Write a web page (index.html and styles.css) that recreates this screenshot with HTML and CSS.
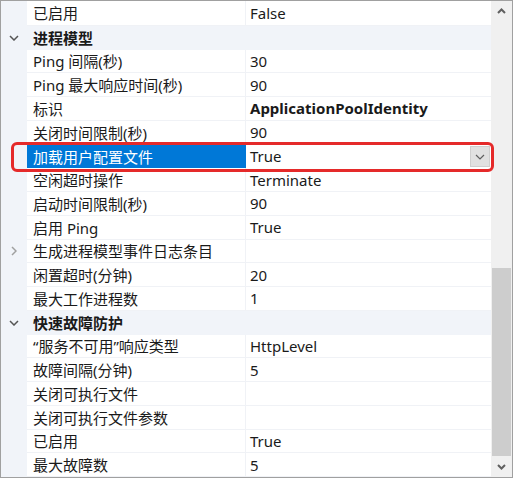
FILE: index.html
```html
<!DOCTYPE html>
<html>
<head>
<meta charset="utf-8">
<link rel="stylesheet" href="styles.css">
</head>
<body>
<div class="panel">
  <div class="grid">
    <div class="row first"><div class="gut"></div><div class="name">已启用</div><div class="val">False</div></div>
    <div class="row cat"><div class="gut"><svg class="chev" width="10" height="6" viewBox="0 0 10 6"><polyline points="1,1 5,5 9,1"/></svg></div><div class="catname">进程模型</div></div>
    <div class="row"><div class="gut"></div><div class="name">Ping 间隔(秒)</div><div class="val">30</div></div>
    <div class="row"><div class="gut"></div><div class="name">Ping 最大响应时间(秒)</div><div class="val">90</div></div>
    <div class="row"><div class="gut"></div><div class="name">标识</div><div class="val bold">ApplicationPoolIdentity</div></div>
    <div class="row"><div class="gut"></div><div class="name">关闭时间限制(秒)</div><div class="val">90</div></div>
    <div class="row sel"><div class="gut"></div><div class="name">加载用户配置文件</div><div class="val">True<span class="dd"><svg width="10" height="6" viewBox="0 0 10 6"><polyline points="1,1 5,5 9,1"/></svg></span></div></div>
    <div class="row"><div class="gut"></div><div class="name">空闲超时操作</div><div class="val">Terminate</div></div>
    <div class="row"><div class="gut"></div><div class="name">启动时间限制(秒)</div><div class="val">90</div></div>
    <div class="row"><div class="gut"></div><div class="name">启用 Ping</div><div class="val">True</div></div>
    <div class="row"><div class="gut"><svg class="exp" width="6" height="10" viewBox="0 0 6 10"><polyline points="1,1 5,5 1,9"/></svg></div><div class="name">生成进程模型事件日志条目</div><div class="val"></div></div>
    <div class="row"><div class="gut"></div><div class="name">闲置超时(分钟)</div><div class="val">20</div></div>
    <div class="row"><div class="gut"></div><div class="name">最大工作进程数</div><div class="val">1</div></div>
    <div class="row cat"><div class="gut"><svg class="chev" width="10" height="6" viewBox="0 0 10 6"><polyline points="1,1 5,5 9,1"/></svg></div><div class="catname">快速故障防护</div></div>
    <div class="row"><div class="gut"></div><div class="name">“服务不可用”响应类型</div><div class="val">HttpLevel</div></div>
    <div class="row"><div class="gut"></div><div class="name">故障间隔(分钟)</div><div class="val">5</div></div>
    <div class="row"><div class="gut"></div><div class="name">关闭可执行文件</div><div class="val"></div></div>
    <div class="row"><div class="gut"></div><div class="name">关闭可执行文件参数</div><div class="val"></div></div>
    <div class="row"><div class="gut"></div><div class="name">已启用</div><div class="val">True</div></div>
    <div class="row"><div class="gut"></div><div class="name">最大故障数</div><div class="val">5</div></div>
  </div>
  <div class="sb">
    <div class="sb-btn"><svg width="9" height="6" viewBox="0 0 9 6"><polyline points="1,5 4.5,1.5 8,5"/></svg></div>
    <div class="sb-track"><div class="thumb"></div></div>
    <div class="sb-btn"><svg width="9" height="6" viewBox="0 0 9 6"><polyline points="1,1 4.5,4.5 8,1"/></svg></div>
  </div>
  <div class="mark"></div>
</div>
</body>
</html>
```
FILE: styles.css
```css
html, body {
  margin: 0;
  padding: 0;
  background: #ffffff;
}
body {
  font-family: "Noto Sans", "Noto Sans CJK SC", sans-serif;
  font-size: 15px;
  color: #1a1a1a;
}
.panel {
  position: relative;
  width: 513px;
  height: 478px;
  box-sizing: border-box;
  border: 1px solid #a0a0a0;
  display: flex;
  background: #ffffff;
}
.grid {
  width: 490px;
  display: flex;
  flex-direction: column;
}
.row {
  display: grid;
  grid-template-columns: 26px 219px 245px;
  height: 23.75px;
  flex: none;
}
.row.first {
  height: 24.75px;
}
.gut {
  background: #f1f4f9;
  display: flex;
  align-items: center;
  justify-content: center;
}
.name, .val {
  box-sizing: border-box;
  border-bottom: 1px solid #f0f2f6;
  display: flex;
  align-items: center;
  white-space: nowrap;
  overflow: hidden;
}
.name {
  padding-left: 6px;
  border-right: 1px solid #f0f2f6;
}
.val {
  padding-left: 4px;
  position: relative;
}
.bold {
  font-weight: bold;
}
.row.cat {
  background: #f1f4f9;
}
.catname {
  grid-column: 2 / 4;
  font-weight: bold;
  padding-left: 6px;
  display: flex;
  align-items: center;
}
.chev polyline {
  fill: none;
  stroke: #555555;
  stroke-width: 1.5;
}
.exp polyline {
  fill: none;
  stroke: #a0a0a0;
  stroke-width: 1.5;
}
.row.sel .name {
  background: #0078d7;
  color: #ffffff;
  border-right: none;
  border-bottom: none;
}
.row.sel .val {
  border-bottom: none;
}
.dd {
  position: absolute;
  right: 1px;
  top: 1.5px;
  width: 20px;
  height: 21px;
  box-sizing: border-box;
  background: #e1e1e1;
  border: 1px solid #cfcfcf;
  display: flex;
  align-items: center;
  justify-content: center;
}
.dd polyline {
  fill: none;
  stroke: #606060;
  stroke-width: 1.2;
}
.sb {
  width: 21px;
  background: #f0f0f0;
  display: flex;
  flex-direction: column;
}
.sb-btn {
  height: 20px;
  display: flex;
  align-items: center;
  justify-content: center;
  flex: none;
}
.sb-btn polyline {
  fill: none;
  stroke: #606060;
  stroke-width: 2;
}
.sb-track {
  flex: 1;
  padding-top: 247px;
  padding-left: 1px;
  padding-right: 1px;
}
.thumb {
  height: 188px;
  background: #cdcdcd;
}
.mark {
  position: absolute;
  left: 10px;
  top: 141px;
  width: 483px;
  height: 30px;
  box-sizing: border-box;
  border: 3px solid #e52a2a;
  border-radius: 6px;
}
```
